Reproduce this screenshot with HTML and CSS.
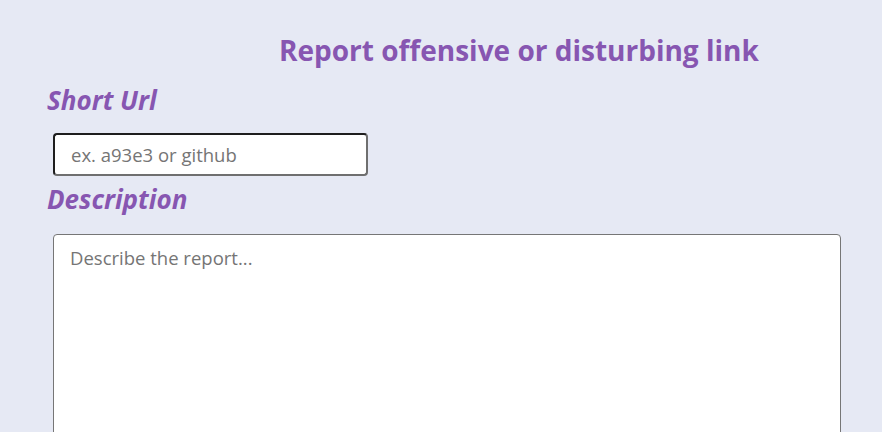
FILE: index.html
```html
<!DOCTYPE html>
<html>
<head>
<meta charset="utf-8">
<link rel="stylesheet" href="styles.css">
</head>
<body>
<main class="page">
  <h1 class="title">Report offensive or disturbing link</h1>
  <form class="form">
    <label class="label" for="url">Short Url</label>
    <input class="input" id="url" type="text" placeholder="ex. a93e3 or github">
    <label class="label" for="desc">Description</label>
    <textarea class="textarea" id="desc" placeholder="Describe the report..."></textarea>
  </form>
</main>
</body>
</html>
```
FILE: styles.css
```css
html, body {
  margin: 0;
  padding: 0;
  background: #e6e9f4;
}
.page {
  font-family: "Open Sans", sans-serif;
  padding: 30px 0 0 47px;
}
.title {
  margin: 0 0 13px 232px;
  font-size: 28px;
  font-weight: 700;
  color: #8756b1;
  line-height: 40px;
}
.form {
  display: flex;
  flex-direction: column;
  align-items: flex-start;
}
.label {
  font-size: 26px;
  font-weight: 700;
  font-style: italic;
  color: #8756b1;
  line-height: 34px;
}
.input {
  margin: 16px 0 6px 6px;
  width: 315px;
  height: 43px;
  box-sizing: border-box;
  border: 2px solid #6f6f6f;
  border-top-color: #1e1e1e;
  border-left-color: #1e1e1e;
  border-radius: 4px;
  padding: 0 16px;
  font-family: "Open Sans", sans-serif;
  font-size: 18.5px;
  background: #fff;
}
.textarea {
  margin: 18px 0 0 6px;
  width: 788px;
  height: 240px;
  box-sizing: border-box;
  border: 1px solid #767676;
  border-radius: 4px;
  padding: 10px 16px;
  font-family: "Open Sans", sans-serif;
  font-size: 18.5px;
  background: #fff;
  resize: none;
}
.input::placeholder, .textarea::placeholder {
  color: #757575;
}
```
